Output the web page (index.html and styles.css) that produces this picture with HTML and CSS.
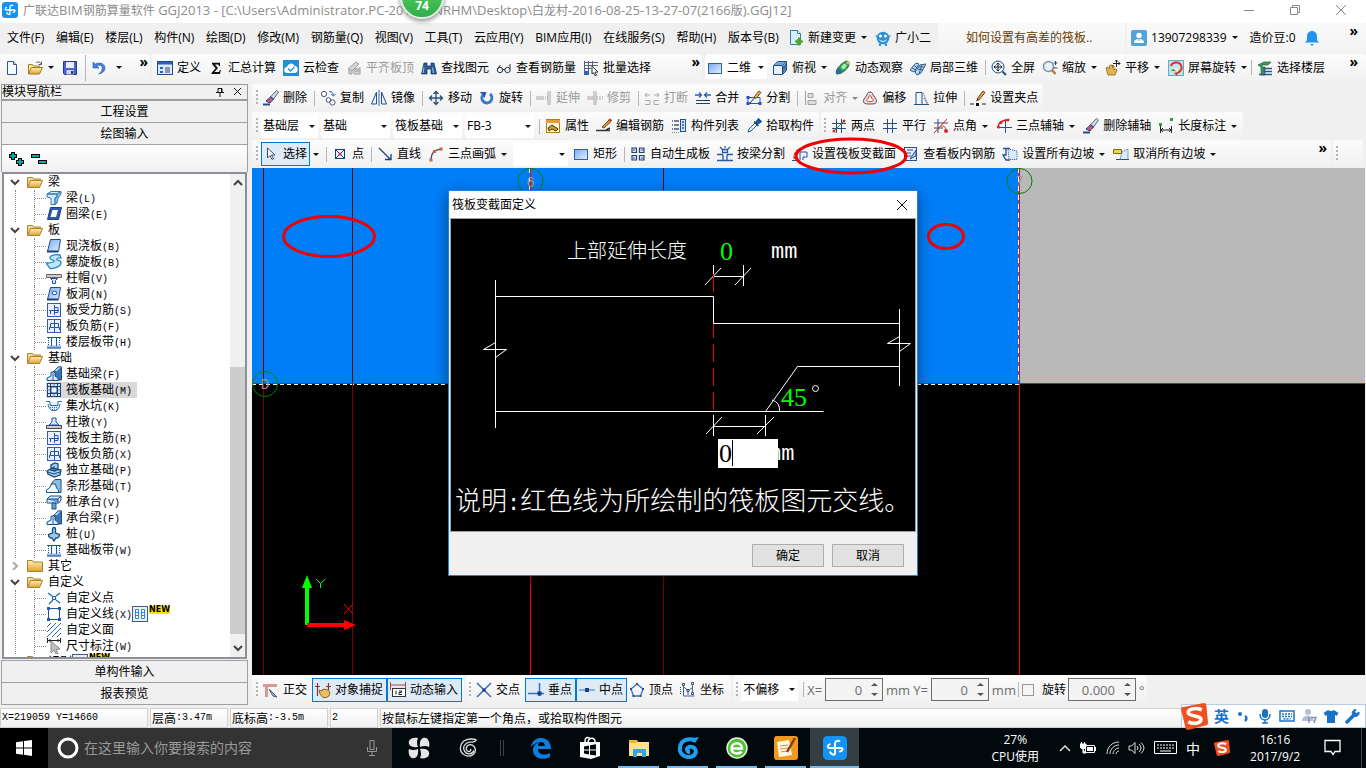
FILE: index.html
```html
<!DOCTYPE html>
<html lang="zh-CN">
<head>
<meta charset="utf-8">
<title>广联达BIM钢筋算量软件 GGJ2013</title>
<link rel="stylesheet" href="styles.css">
</head>
<body>
<svg class="sprite" aria-hidden="true">
<defs>
<linearGradient id="gb" x1="0" y1="0" x2="1" y2="1"><stop offset="0" stop-color="#7aaaf0"/><stop offset="1" stop-color="#e4efff"/></linearGradient>
<linearGradient id="gy" x1="0" y1="0" x2="0" y2="1"><stop offset="0" stop-color="#fff0b0"/><stop offset="1" stop-color="#e0a030"/></linearGradient>
<symbol id="app" viewBox="0 0 16 16"><rect width="16" height="16" rx="3" fill="#1493f5"/><path d="M8 12.500V5a1.900 1.900 0 0 1 3.300-1.200M8 12.500c-1.800 0-3-.8-3.300-2.200M3.500 8h9.500M3.500 8c-.6-1.300.2-2.600 1.500-2.600M13 8c0 1.600-1 2.400-2.300 2.400" fill="none" stroke="#fff" stroke-width="1.300"/></symbol>
<symbol id="new" viewBox="0 0 16 16"><path d="M3.500 1.500h6l3 3v10h-9z" fill="#f6faff" stroke="#2f548c"/><path d="M9.500 1.500v3h3" fill="#cfe0f5" stroke="#2f548c"/></symbol>
<symbol id="open" viewBox="0 0 16 16"><path d="M1.500 14V4.500h4l1 1.500h6v2" fill="#ffe9a0" stroke="#a87a20"/><path d="M1.500 14l3-6.500h11l-3 6.500z" fill="url(#gy)" stroke="#a87a20"/><path d="M9 3c2-2 4-1 5 1m.500-2.500V4.500h-3" fill="none" stroke="#556"/></symbol>
<symbol id="save" viewBox="0 0 16 16"><path d="M1.500 1.500h13v13h-12l-1-1z" fill="#4d63c9" stroke="#27348b"/><path d="M4 2h8v6H4z" fill="#e8edff"/><path d="M4.500 10h7v4.500h-7z" fill="#cfd6e8"/><path d="M9 11h2v3H9z" fill="#333b70"/></symbol>
<symbol id="undo" viewBox="0 0 16 16"><path d="M2 2v6h6L5.800 5.800C9 4 12 6 11 9.500 10.500 12 9 13 7.500 14c4-.5 6.500-3 6.500-6 0-4-5-6.500-9.800-3.900z" fill="#4a82dc" stroke="#2458ac" stroke-width=".6"/></symbol>
<symbol id="def" viewBox="0 0 16 16"><rect x=".5" y="1.500" width="15" height="13" fill="#dce9fb" stroke="#1c4a94"/><path d="M1 2h14v2.500H1z" fill="#2a62b8"/><path d="M3 7h3v2H3zM3 11h3v2H3z" fill="#2a62b8"/><path d="M8 8h5M8 12h5M8 10h5" stroke="#445"/></symbol>
<symbol id="sum" viewBox="0 0 16 16"><path d="M4 2.800h8V6h-1l-.6-1.500H7L10 8l-3.500 4H11l.8-2h1L12 14H3.500v-1L7.500 8.300 4 4z" fill="#111"/></symbol>
<symbol id="cloudck" viewBox="0 0 16 16"><rect width="16" height="16" fill="#1f8fd8"/><path d="M4.500 13a3 3 0 0 1-.5-6 4 4 0 0 1 7.500-1.200A3.700 3.700 0 0 1 12 13z" fill="#fff"/><path d="M5 8.500l2.500 2.500 4-4" fill="none" stroke="#1f8fd8" stroke-width="1.400"/></symbol>
<symbol id="flat" viewBox="0 0 16 16"><path d="M2 9l8-7 3 2-7 7zM3 10v4h3v-3M8 9v5h6V7" fill="#d4d4d4" stroke="#a0a0a0"/><path d="M9 11h4M9 9h4" stroke="#999"/></symbol>
<symbol id="bino" viewBox="0 0 16 16"><path d="M3 3h3v3h4V3h3l2.500 11H10v-5H6v5H.5z" fill="#2c5b96" stroke="#13305c" stroke-width=".7"/><path d="M3 7.500L2 13m9.500-5.500l1 5.500" stroke="#a8c8ee"/></symbol>
<symbol id="glass" viewBox="0 0 16 16"><circle cx="4" cy="10" r="2.700" fill="#e8f0fa" stroke="#333"/><circle cx="11.500" cy="10" r="2.700" fill="#e8f0fa" stroke="#333"/><path d="M6.500 9.500h2.500M1.300 9l3.200-4M14 9V4" fill="none" stroke="#333"/></symbol>
<symbol id="batch" viewBox="0 0 16 16"><path d="M1.500 1v14M1 2.500h14M1 5.500h14M1 8.500h7M5.500 1v14M9.500 1v5" fill="none" stroke="#55627a"/><path d="M1 11h5v4H1z" fill="#2f64b8"/><path d="M9 6l6 6-3 .2 1.500 3-1.500.5-1.500-3L9 14z" fill="#fff" stroke="#334"/></symbol>
<symbol id="rect" viewBox="0 0 16 16"><rect x="1.500" y="3.500" width="13" height="10" fill="url(#gb)" stroke="#2f5fb5"/></symbol>
<symbol id="cube" viewBox="0 0 16 16"><path d="M1.500 5.500l4-4h9v9l-4 4h-9z" fill="#e6f1ff" stroke="#28507e"/><path d="M1.500 5.500h9v9M10.500 5.500l4-4" fill="none" stroke="#28507e"/><path d="M2 5l3.500-3H14l-3.500 3z" fill="#6fa4dc"/><path d="M11 6l3-3v7l-3 3.500z" fill="#3e73ad"/></symbol>
<symbol id="orbit" viewBox="0 0 16 16"><path d="M13 1.500c2 1 1 5-2 8s-7 5-9 4 0-5 3-8 6-5 8-4z" fill="#36a257" stroke="#145f2b"/><ellipse cx="9" cy="6.500" rx="3" ry="2" transform="rotate(-45 9 6.500)" fill="#a3ecae"/><path d="M1 13l3-5 3 3-5 4z" fill="#2f64b2"/><path d="M12 2l2 2" stroke="#f2d23a" stroke-width="2"/></symbol>
<symbol id="part3d" viewBox="0 0 16 16"><path d="M0 10l6-7 3 1-5 8zM5 12l5-7 6-1-5 9-4 2z" fill="#bfd9f2" stroke="#2b5b88"/><path d="M2 8l4 2M4 5.500l3 2M8 9l5 1M9 7l5 0M12 4.500L9 14" stroke="#2b5b88" fill="none"/></symbol>
<symbol id="full" viewBox="0 0 16 16"><circle cx="7" cy="7" r="6" fill="#e9f2fd" stroke="#284f80"/><path d="M11.500 11.500L15 15" stroke="#284f80" stroke-width="2"/><path d="M7 3v8M3 7h8M5.500 4.500L7 3l1.500 1.500M5.500 9.500L7 11l1.500-1.500M4.500 5.500L3 7l1.500 1.500M9.500 5.500L11 7 9.500 8.500" fill="none" stroke="#222"/></symbol>
<symbol id="zoom" viewBox="0 0 16 16"><circle cx="6.500" cy="6.500" r="5" fill="#e9f2fd" stroke="#7d93b0" stroke-width="1.500"/><path d="M10 10l3.500 4" stroke="#bc7a28" stroke-width="2.500"/><path d="M13.500 1v4M11.500 3h4M11.500 8h4" stroke="#28507e"/></symbol>
<symbol id="pan" viewBox="0 0 16 16"><path d="M1 8l2 7h7l2-5-2-1-1 1V6L7.500 5v3L7 5H5.500L4 6l.5 3L2.500 7z" fill="#e0b355" stroke="#8d6620" stroke-width=".8"/><path d="M11.500 0v7M8 3.500h7M10 1.500L11.500 0 13 1.500M13.500 2L15 3.500 13.500 5" fill="none" stroke="#222"/></symbol>
<symbol id="spin" viewBox="0 0 16 16"><rect x=".5" y=".5" width="15" height="15" fill="#bfe5f0" stroke="#61a9c4"/><path d="M3 6c1-4 8-5 10-1s-1 7-4 8" fill="none" stroke="#dc3430" stroke-width="2"/><path d="M3 11l3-3 2 3z" fill="#3c9741"/><path d="M10 12l-4 1 3 3z" fill="#dc3430"/><path d="M4 8h6v4" fill="#fff0b8"/></symbol>
<symbol id="floor" viewBox="0 0 16 16"><path d="M1 5l6-3h7l-3 3H5v2h3v8H4V7z" fill="#3d9a5c" stroke="#1d5e38" stroke-width=".7"/><path d="M6 8.500h9M6 11.500h9M2 14.500h13" stroke="#28578e" stroke-width="1.500"/></symbol>
<symbol id="erase" viewBox="0 0 16 16"><path d="M0 14.500h7" stroke="#1d4f96" stroke-width="2"/><path d="M13.500.5L15.500 2l-5 7-3-2z" fill="#d5dde8" stroke="#566"/><path d="M7.500 7l3 2L7 13l-4-2z" fill="#7c6fc8" stroke="#2e3173"/><path d="M5 9l4 2.500" stroke="#e6503c" stroke-width="1.500"/></symbol>
<symbol id="copy" viewBox="0 0 16 16"><circle cx="4" cy="4" r="2.600" fill="#fff" stroke="#44597a"/><circle cx="8.500" cy="10" r="2.300" fill="#fff" stroke="#44597a"/><circle cx="12.500" cy="12.500" r="2.600" fill="#fff" stroke="#44597a"/><path d="M9 1.500c3 0 4 1 4.500 4M11 4l2.500 2L15.500 4" fill="none" stroke="#2c62ad"/></symbol>
<symbol id="mirror" viewBox="0 0 16 16"><path d="M5.500 2v12H.5zM10.500 2v12h5z" fill="#eaf3ff" stroke="#2c4e80"/><path d="M8 0v16" stroke="#2c62ad"/></symbol>
<symbol id="move" viewBox="0 0 16 16"><path d="M8 1.500v13M1.500 8h13M5.500 4L8 1.500 10.500 4M5.500 12L8 14.500l2.500-2.500M4 5.500L1.500 8 4 10.500M12 5.500L14.500 8 12 10.500" fill="none" stroke="#2a4d7c" stroke-width="1.300"/></symbol>
<symbol id="rot" viewBox="0 0 16 16"><path d="M3.500 5.500a5 5 0 1 0 7.500-1.500" fill="none" stroke="#3c79cb" stroke-width="3"/><path d="M1 2h6.500L5.500 8z" fill="#2458ac"/></symbol>
<symbol id="extend" viewBox="0 0 16 16"><path d="M0 7h7M0 9h7M12 1v14M14 1v14" stroke="#a6a6a6"/><path d="M7 7h5M7 9h5" stroke="#aaa" stroke-dasharray="1 1"/></symbol>
<symbol id="trim" viewBox="0 0 16 16"><path d="M0 7h7M0 9h7M7 1v14M9 1v14" stroke="#a6a6a6"/><path d="M9 7h7M9 9h7" stroke="#aaa" stroke-dasharray="2 1"/></symbol>
<symbol id="brk" viewBox="0 0 16 16"><path d="M1 10.500h5v4H1M15 10.500h-5v4h5M1 5h5M3 3L1 5l2 2M15 5h-5M13 3l2 2-2 2" fill="none" stroke="#aaa"/></symbol>
<symbol id="merge" viewBox="0 0 16 16"><path d="M1 10.500h14M1 13.500h14" stroke="#203f6c"/><path d="M0 5h6M4 2.500L6.500 5 4 7.500M16 5h-6M12 2.500L9.500 5 12 7.500" fill="none" stroke="#2c62ad" stroke-width="1.300"/></symbol>
<symbol id="split" viewBox="0 0 16 16"><path d="M2 7.500h12v6H2z" fill="#eef6ff" stroke="#2450ce"/><path d="M4 13l8-9" stroke="#222"/><path d="M8 7l5-6 2 1.500-5 6z" fill="#e1b04c" stroke="#755018"/><path d="M.5 6h3v3h-3zM.5 12h3v3h-3zM12.500 12h3v3h-3z" fill="#244ec4"/></symbol>
<symbol id="align" viewBox="0 0 16 16"><path d="M2.500 1v14" stroke="#a0a0a0"/><path d="M5 3.500h5v4H5zM5 10.500h8v4H5z" fill="#ddd" stroke="#a0a0a0"/></symbol>
<symbol id="offset" viewBox="0 0 16 16"><path d="M5 5c0-4 6-4 6 0l3 4c2 5-2 5-6 5s-8 0-6-5z" fill="#f5d7d3" stroke="#45557d"/><path d="M6.500 8c0-3 3-3 3 0l1.500 1.500c1 2-1 2-3 2s-4 0-3-2z" fill="#fff" stroke="#d0342c"/></symbol>
<symbol id="stretch" viewBox="0 0 16 16"><path d="M3 14.500V2.500h6v12z" fill="#f0f7ff" stroke="#28507e"/><path d="M10 3l5 11.500M11 8l3 6" stroke="#28507e" stroke-dasharray="1 1" fill="none"/><path d="M1 14.500h15" stroke="#28507e"/></symbol>
<symbol id="grippt" viewBox="0 0 16 16"><path d="M0 14h4M12 14h4" stroke="#222"/><path d="M6 13h3v3H6z" fill="#111"/><path d="M7 9l6-8 2 1.500L9 10z" fill="#e1a34c" stroke="#72450d"/><path d="M7 9l2 1-3 1.500z" fill="#333"/></symbol>
<symbol id="prop" viewBox="0 0 16 16"><rect x="1.500" y="1.500" width="13" height="13" fill="#fff6dc" stroke="#b7791e"/><path d="M1 2h14v3H1z" fill="#e59b38"/><path d="M3 10l4-3 6 4-2 2-4-2-3 2z" fill="#cf9e30" stroke="#46350d"/></symbol>
<symbol id="pen" viewBox="0 0 16 16"><path d="M0 12.500h14M10 12l4-2" fill="none" stroke="#333" stroke-width="1.500"/><path d="M6 9l7-7 2 1.500-7 6.500z" fill="#d99b43" stroke="#72450d"/><path d="M13 1l2.500 2" stroke="#d43a2a" stroke-width="2"/></symbol>
<symbol id="list" viewBox="0 0 16 16"><path d="M1 3h1M1 7h1M1 11h1M3 3h5M3 7h5M3 11h5" stroke="#44597a" stroke-width="1.500"/><rect x="9.500" y="1.500" width="5" height="12" fill="#cfe2fb" stroke="#28507e"/><path d="M11 4h2M11 7h2M11 10h2" stroke="#2458ac" stroke-width="1.500"/><path d="M1 14.500h7" stroke="#888" stroke-dasharray="1 1"/></symbol>
<symbol id="pick" viewBox="0 0 16 16"><path d="M2 14l1-3 6-6 2 2-6 6z" fill="#dff0ff" stroke="#2b5d91"/><path d="M8 3.500l4.500 4.500M9.500 5l3-4 2.500 2.500-4 3z" fill="#2474be" stroke="#174b7e" stroke-width="1.500"/></symbol>
<symbol id="twop" viewBox="0 0 16 16"><path d="M5.500 1v14M10.500 1v14M1 5.500h14M1 10.500h14" stroke="#2f4d7a"/><path d="M2 14L14 2" stroke="#1d9d3a"/><circle cx="3" cy="13" r="1.500" fill="#d22"/><circle cx="13" cy="3" r="1.500" fill="#d22"/></symbol>
<symbol id="para" viewBox="0 0 16 16"><path d="M5.500 1v14M10.500 1v14M1 5.500h14M1 10.500h14" stroke="#2f4d7a"/></symbol>
<symbol id="pang" viewBox="0 0 16 16"><path d="M5 1v14M1 5h14M1 10h9" stroke="#2f4d7a"/><path d="M1 15L14 1M8 8c4 0 5 2 5 5" fill="none" stroke="#d22"/><circle cx="13" cy="13" r="2" fill="#d22"/></symbol>
<symbol id="tria" viewBox="0 0 16 16"><path d="M9.500 1v14M2 9.500h14" stroke="#2f4d7a"/><path d="M2 10C2 5 6 2 13 2" fill="none" stroke="#d22" stroke-width="1.300"/><circle cx="2.500" cy="9" r="1.500" fill="#d22"/><circle cx="12" cy="2" r="1.500" fill="#d22"/><circle cx="5" cy="4.500" r="1.500" fill="#d22"/></symbol>
<symbol id="len" viewBox="0 0 16 16"><path d="M2.500 8v7M13.500 8v7M3 12h10M5 10l-2 2 2 2M11 10l2 2-2 2" fill="none" stroke="#222"/><path d="M1 5h3v3H1zM12 0h3v3h-3z" fill="#2ba03c"/></symbol>
<symbol id="cursor" viewBox="0 0 16 16"><path d="M4.500 2v10l2.500-2.500 2 4 1.500-.8-2-3.700h3.500z" fill="#fff" stroke="#334c78"/></symbol>
<symbol id="pt" viewBox="0 0 16 16"><rect x="3.500" y="3.500" width="9" height="9" fill="#eaf2ff" stroke="#1c3f78"/><path d="M4 4l8 8M12 4l-8 8" stroke="#1c3f78"/><circle cx="8" cy="8" r="1.500" fill="#d33"/></symbol>
<symbol id="line" viewBox="0 0 16 16"><path d="M2 2l11 11M8 13.500h6V8" fill="none" stroke="#1c3f78" stroke-width="1.300"/></symbol>
<symbol id="arc" viewBox="0 0 16 16"><path d="M3 14C3 8 5 4 13 3" fill="none" stroke="#2258a8" stroke-width="1.500"/><path d="M1.500 12.500h3v3h-3zM11.500 1.500h3v3h-3zM5 4h3v3H5z" fill="#dc5a36"/></symbol>
<symbol id="auto" viewBox="0 0 16 16"><path d="M2 2h4.500v4.500H2zM9.500 2H14v4.500H9.500zM2 9.500h4.500V14H2zM9.500 9.500H14V14H9.500z" fill="#d9e8fb" stroke="#2b3f6c" stroke-width="1.200"/><path d="M3 4h2M11 4h2M3 12h2M11 12h2" stroke="#2458c4"/></symbol>
<symbol id="beam" viewBox="0 0 16 16"><path d="M0 8.500h6M10 8.500h6M0 14.500h16M6 8.500V14M10 8.500V14M5.500 3.500h5v3h-5zM8 0v2M3 1l2 2M13 1l-2 2" fill="#eaf3ff" stroke="#2858a0" stroke-width="1.300"/></symbol>
<symbol id="raft" viewBox="0 0 16 16"><path d="M8 14V6h7v5h-4v3" fill="#eaf3ff" stroke="#234eac"/><path d="M2 13c0-6 2-9 7-10" fill="none" stroke="#d94830" stroke-width="1.500" stroke-dasharray="3 1"/><path d="M0 14.500h7" stroke="#234eac"/></symbol>
<symbol id="view" viewBox="0 0 16 16"><rect x="1.500" y="1.500" width="12" height="13" fill="#eaf3ff" stroke="#28508e"/><path d="M4 4h6M4 7h4M4 10h4" stroke="#28508e"/><path d="M13 4l-6 9 6-3z" fill="#a9c8ee" stroke="#28508e"/></symbol>
<symbol id="slope" viewBox="0 0 16 16"><path d="M1 2.500h7M4 3v6H1l3 5h4" fill="none" stroke="#234e9c" stroke-width="1.300"/><path d="M6 3l9 2v8.500H7z" fill="#dceafb" stroke="#234e9c" stroke-dasharray="1 1"/></symbol>
<symbol id="unslope" viewBox="0 0 16 16"><path d="M.5 3.500h8v4h-8z" fill="#f3d34a" stroke="#866a12"/><path d="M7 13.500L9 6l6-3v10.500z" fill="#dceafb" stroke="#234e9c" stroke-dasharray="1 1"/><path d="M3 13.500h13" stroke="#234e9c"/></symbol>
<symbol id="newchg" viewBox="0 0 16 16"><path d="M2.500.5h7l3 3v11h-10z" fill="#d9efff" stroke="#2f7eae"/><path d="M9.500.5v3h3" fill="#fff" stroke="#2f7eae"/><path d="M11 7.500v8M7 11.500h8M9 9.500l4 4M13 9.500l-4 4" stroke="#49a82c" stroke-width="2"/></symbol>
<symbol id="fish" viewBox="0 0 16 16"><circle cx="8" cy="8" r="6.300" fill="#2a8fd4"/><path d="M0 5l3 1v3zM16 5l-3 1v3z" fill="#2a8fd4"/><circle cx="5.500" cy="6" r="1.500" fill="#fff"/><circle cx="10.500" cy="6" r="1.500" fill="#fff"/><path d="M4 9c2 2.500 6 2.500 8 0-1 4-7 4-8 0z" fill="#fff"/><path d="M5 13.500V16M11 13.500V16" stroke="#2a8fd4" stroke-width="2"/></symbol>
<symbol id="user" viewBox="0 0 16 16"><rect width="16" height="16" rx="2" fill="#4fa4d8"/><circle cx="8" cy="5.500" r="2.700" fill="#fff"/><path d="M3 13c0-3 2-4 5-4s5 1 5 4z" fill="#fff"/><path d="M8 9v2" stroke="#4fa4d8"/></symbol>
<symbol id="bell" viewBox="0 0 14 16"><path d="M2 10V6a5 5 0 0 1 10 0v4l2 2.500H0z" fill="#2492f0"/><path d="M5 14h4l-2 2z" fill="#2492f0"/></symbol>
<symbol id="fopen" viewBox="0 0 16 16"><path d="M.5 13V3.500h5l1 1.500h7v3" fill="#f7d887" stroke="#a8822c"/><path d="M.5 13.500l3-7h12l-3 7z" fill="url(#gy)" stroke="#a8822c"/></symbol>
<symbol id="fclosed" viewBox="0 0 16 16"><path d="M.5 13.500V2.500h5l1 1.500h9v9.500z" fill="url(#gy)" stroke="#a8822c"/></symbol>
<symbol id="tbeam" viewBox="0 0 16 16"><path d="M1 4l4-2.500h10L11 4zM1 4h10v3l-2 1v6.500H5V8L1 7z" fill="#d8ecff" stroke="#2a79b4"/><path d="M11 7V4l4-2.500V4l-3 4-1 5-2 1.500V8z" fill="#8fc2ee" stroke="#2a79b4"/></symbol>
<symbol id="ring" viewBox="0 0 16 16"><path d="M4.500 1.500h11l-3 12h-11z" fill="#2f5ca9" stroke="#1a3c80"/><path d="M6.500 4h5.500l-2 7H4.500z" fill="#fff"/></symbol>
<symbol id="slab" viewBox="0 0 16 16"><path d="M4.500 1.500h10l-2 12h-11z" fill="url(#gb)" stroke="#1a4a96"/><path d="M1 13.500h11" stroke="#1a3c80" stroke-width="2"/></symbol>
<symbol id="spiral" viewBox="0 0 16 16"><path d="M14 1C8 0 3 2 4 4.500c1 2 5 1.500 4 3C7 9 4 9 0 9l4 5.500c4 .5 11-2 11-6 0-3-5-1.500-4-3.500.5-1.500 3-1 4-1z" fill="#bfe6fb" stroke="#2a84be" stroke-width="1.300"/></symbol>
<symbol id="cap" viewBox="0 0 16 16"><path d="M.5 4.500h15v3H.5z" fill="#ccc" stroke="#666"/><path d="M4.500 8.500h7l-2 2v3h-3v-3z" fill="#d8e8ff" stroke="#234eac"/></symbol>
<symbol id="hole" viewBox="0 0 16 16"><path d="M4.500 1.500h10l-2 12h-11z" fill="url(#gb)" stroke="#1a4a96"/><path d="M1 13.500h11" stroke="#1a3c80" stroke-width="2"/><ellipse cx="8.500" cy="7" rx="2.500" ry="1.700" fill="#fff" stroke="#1a4a96"/></symbol>
<symbol id="bar1" viewBox="0 0 16 16"><rect x="1.500" y="1.500" width="13" height="13" fill="#e8f1ff" stroke="#2f5fb5"/><path d="M3 8.500h10M8.500 3v10M4.500 8v4M8 5.500h4v5H8" fill="none" stroke="#2458ac"/></symbol>
<symbol id="bar2" viewBox="0 0 16 16"><rect x="1.500" y="1.500" width="13" height="13" fill="#e8f1ff" stroke="#2f5fb5"/><path d="M8.500 2v12M3.500 12V9.500h10V12M4.500 9V5.500h8V9" fill="none" stroke="#2458ac"/></symbol>
<symbol id="strip" viewBox="0 0 16 16"><path d="M1 11.500h14v3H1z" fill="#8fb7ee"/><path d="M1 14h14M1 3.500h14M5.500 4v8M10.500 4v8" stroke="#1d52a0"/><path d="M2.500 4v8M13.500 4v8" stroke="#1d52a0" stroke-dasharray="1 1"/></symbol>
<symbol id="fbeam" viewBox="0 0 16 16"><path d="M7 6l5-5h3.500v13h-4z" fill="#3b76b4" stroke="#184e87"/><path d="M8 5l4-4h3.500L11 6z" fill="#9fc9ee" stroke="#184e87" stroke-width=".7"/><path d="M1 14.500V12l4-2V6h4v4l3 2v2.500z" fill="#dcebfa" stroke="#184e87"/><path d="M7 7v7" stroke="#7aa8d8" stroke-width="2"/></symbol>
<symbol id="raftf" viewBox="0 0 16 16"><rect x="1.500" y="1.500" width="13" height="13" fill="#d8e9ff" stroke="#1c3f78"/><path d="M4.500 1v14M11.500 1v14M1 4.500h14M1 11.500h14" stroke="#1c3f78"/><path d="M8 1v14M1 8h14" stroke="#5078b8"/><rect x="5" y="5" width="6" height="6" fill="#f2f7ff" stroke="#1c3f78"/></symbol>
<symbol id="pit" viewBox="0 0 16 16"><path d="M0 3.500h4v4h8v-4h4M2 6c1 9 11 9 12 0" fill="#e3efff" stroke="#2a70ae"/><path d="M4 9.500h8M6 11.500h5" stroke="#2a70ae" stroke-dasharray="1 1"/></symbol>
<symbol id="pier" viewBox="0 0 16 16"><path d="M.5 11.500h15v3H.5z" fill="#ccc" stroke="#444"/><path d="M3 11l3-3V4h4v4l3 3z" fill="#d8e8ff" stroke="#234eac"/></symbol>
<symbol id="indep" viewBox="0 0 16 16"><path d="M1 9l5-3 9 2-1 5-6 2-6-3zM5 8V3l4-2 3 1v5L9 9z" fill="#a4ccec" stroke="#164a7c" stroke-width="1.300"/><path d="M8 4v5M2 10l6 2 6-2" fill="none" stroke="#164a7c"/></symbol>
<symbol id="stripf" viewBox="0 0 16 16"><path d="M5 6l4-4.500h6v13h-4z" fill="#8fbce2" stroke="#184e87"/><path d="M.5 14.500V12l3-2 2-4h4l1 4 2 2v2.500z" fill="#f1f8ff" stroke="#184e87"/></symbol>
<symbol id="pcap" viewBox="0 0 16 16"><path d="M1 5l3-3h11v4l-2 3H1z" fill="#d8ecff" stroke="#184e87"/><path d="M1 5h11v4M12 5l3-3M6 9h4v6H6z" fill="#6ba0d4" stroke="#184e87"/></symbol>
<symbol id="pile" viewBox="0 0 16 16"><path d="M6.500 7V3c0-2 3-2 3 0v4l4 1.500c0 3-2 3.500-3.500 3.500L8 15l-2-3c-1.500 0-3.500-.5-3.500-3.500z" fill="#9cc8ec" stroke="#164a7c" stroke-width="1.300"/></symbol>
<symbol id="cpt" viewBox="0 0 16 16"><path d="M2 3l4 3M14 3l-4 3M3 14l4-4M14 13l-4-3" stroke="#2368b0" stroke-width="1.300"/><rect x="6.500" y="6.500" width="3" height="3" fill="#cfe6ff" stroke="#2368b0"/></symbol>
<symbol id="cline" viewBox="0 0 16 16"><rect x="2.500" y="2.500" width="11" height="11" fill="none" stroke="#1c4f9c"/><path d="M1 1h3v3H1zM12 1h3v3h-3zM1 12h3v3H1zM12 12h3v3h-3z" fill="#1c5fc0"/></symbol>
<symbol id="cface" viewBox="0 0 16 16"><path d="M1 5l4-4M1 10l9-9M1 15L15 1M6 15l9-9M11 15l4-4" stroke="#2368b0"/></symbol>
<symbol id="dim" viewBox="0 0 16 16"><path d="M1.500 0v5M14.500 0v5M2 2.500h12M4 1v3M12 1v3" stroke="#222"/><path d="M5 3l9 8-4 .4 2 4-2 .6-2-4-3 3z" fill="#c2c2c2" stroke="#888"/></symbol>
<symbol id="grid2" viewBox="0 0 16 16"><rect x=".5" y=".5" width="15" height="15" fill="#e2f0ff" stroke="#445b78"/><path d="M3.500 3.500h3v9h-3zM9.500 3.500h3v9h-3zM3 6.500h4M3 9.500h4M9 6.500h4M9 9.500h4" fill="#fff" stroke="#2e86d8"/></symbol>
<symbol id="ortho" viewBox="0 0 16 16"><path d="M0 2h14v3H5v10H2V5H0z" fill="#d59a96"/><path d="M6 7l8 8-4-1z" fill="#a9c1de" stroke="#44597a"/></symbol>
<symbol id="snap" viewBox="0 0 16 16"><path d="M2.500 1v13M13.500 1v8M0 4.500h5M11 4.500h5" stroke="#8a3030" stroke-width="1.200"/><path d="M4 8l3 1 1-2 5 1 2 2-1 4-3 1.500H8L5 12z" fill="#e9c060" stroke="#906520"/></symbol>
<symbol id="dyn" viewBox="0 0 16 16"><path d="M.5 0v8M15.500 0v8M1 3h14" stroke="#a04a4a"/><rect x="2.500" y="6.500" width="13" height="8" fill="#fff" stroke="#333"/><path d="M6 8.500v4M9 9h2.500v1.500H9v2h3" fill="none" stroke="#222"/></symbol>
<symbol id="xp" viewBox="0 0 16 16"><path d="M1 1l14 14M15 1L1 15" stroke="#3b6fb8" stroke-width="1.500"/><rect x="6.500" y="6.500" width="3" height="3" fill="#173f88"/></symbol>
<symbol id="perp" viewBox="0 0 16 16"><path d="M0 11.500h16M11.500 1v13" stroke="#3b6fb8" stroke-width="1.500"/><rect x="9.500" y="9.500" width="4" height="4" fill="#173f88"/></symbol>
<symbol id="mid" viewBox="0 0 16 16"><path d="M0 8h16" stroke="#6c9bdc" stroke-width="1.500"/><rect x="6" y="6" width="4" height="4" fill="#173f88"/></symbol>
<symbol id="vert" viewBox="0 0 16 16"><path d="M8 2l6 5-2.500 7h-7L2 7z" fill="none" stroke="#3b6fb8" stroke-width="1.300"/><path d="M7 1h2v2H7zM13 6h2v2h-2zM1 6h2v2H1zM3.500 13h2v2h-2zM10.500 13h2v2h-2z" fill="#244e98"/></symbol>
<symbol id="coord" viewBox="0 0 16 16"><path d="M3.500 3v11h11M4 5l4 4 4-3M8 9v4M12.500 2v9" fill="none" stroke="#346bb5"/><path d="M2.500 1.500h2v2h-2zM7 7.500h2v2H7zM11.500.5h2v2h-2zM11.500 10.500h2v2h-2z" fill="#fff" stroke="#445"/><path d="M.5 5v8" stroke="#444" stroke-dasharray="1 1"/></symbol>
<symbol id="sogou" viewBox="0 0 26 26"><path d="M1 4L22 0q2 0 2.400 2L26 19q0 2-1.500 2.500L7 26q-2 0-2.600-1.600L0 6q0-1.500 1-2z" fill="#f0501e"/><path d="M20 6.500C13 4 6.500 6 7 9.500c.5 4 12.500 2 12.300 6.500C19 20 11 20.500 7 18" fill="none" stroke="#fff" stroke-width="3.400"/></symbol>
<symbol id="swirl" viewBox="0 0 24 24"><path d="M19 4C12 2 5 4 4 11s4 10 9 10c6 0 8-5 6-8s-7-3-8 0c0 2 1 3 3 3" fill="none" stroke="currentColor" stroke-width="4"/><path d="M12 3l11-2-4 6z" fill="currentColor"/></symbol>
</defs>
</svg>

<div class="app">
  <header class="title">
    <svg class="ic"><use href="#app"/></svg>
    <h1>广联达<span>BIM</span>钢筋算量软件<span> GGJ2013 - [C:\Users\Administrator.PC-201607NRHM\Desktop\</span>白龙村<span>-2016-08-25-13-27-07(2166</span>版<span>).GGJ12]</span></h1>
    <div class="winbtns">
      <button aria-label="最小化"><svg width="12" height="12"><path d="M1 6.500h10" stroke="#888"/></svg></button>
      <button aria-label="还原"><svg width="12" height="12"><path d="M1.500 3.500h7v7h-7zM3.500 3V1.500h7v7H9" fill="none" stroke="#888"/></svg></button>
      <button aria-label="关闭"><svg width="12" height="12"><path d="M1 1l10 10M11 1L1 11" stroke="#888"/></svg></button>
    </div>
    <div class="ball">74</div>
  </header>

  <nav class="menu">
    <div class="menus">
      <button>文件(F)</button><button>编辑(E)</button><button>楼层(L)</button><button>构件(N)</button><button>绘图(D)</button><button>修改(M)</button><button>钢筋量(Q)</button><button>视图(V)</button><button>工具(T)</button><button>云应用(Y)</button><button>BIM应用(I)</button><button>在线服务(S)</button><button>帮助(H)</button><button>版本号(B)</button>
    </div>
    <div class="extras">
      <button class="tool"><svg class="ic"><use href="#newchg"/></svg>新建变更<i class="dd"></i></button>
      <button class="tool"><svg class="ic"><use href="#fish"/></svg>广小二</button>
    </div>
    <a class="tip" href="#tip">如何设置有高差的筏板..</a>
    <div class="account">
      <button class="tool"><svg class="ic"><use href="#user"/></svg><span class="phone">13907298339</span><i class="dd"></i></button>
      <span>造价豆:0</span>
      <svg class="bell" viewBox="0 0 14 16"><use href="#bell"/></svg>
      <button class="more" aria-label="更多">»</button>
    </div>
  </nav>

  <div class="bar top">
    <div class="grp ga">
      <button class="tool" aria-label="新建"><svg class="ic"><use href="#new"/></svg></button>
      <button class="tool" aria-label="打开"><svg class="ic"><use href="#open"/></svg><i class="dd"></i></button>
      <button class="tool" aria-label="保存"><svg class="ic"><use href="#save"/></svg></button>
      <i class="sep tall"></i>
      <button class="tool" aria-label="撤销"><svg class="ic"><use href="#undo"/></svg><i class="dd wide"></i></button>
      <button class="more" aria-label="更多">»</button>
    </div>
    <div class="grp gbx">
      <button class="tool"><svg class="ic"><use href="#def"/></svg>定义</button>
      <button class="tool"><svg class="ic"><use href="#sum"/></svg>汇总计算</button>
      <button class="tool"><svg class="ic"><use href="#cloudck"/></svg>云检查</button>
      <button class="tool" disabled><svg class="ic"><use href="#flat"/></svg>平齐板顶</button>
      <button class="tool"><svg class="ic"><use href="#bino"/></svg>查找图元</button>
      <button class="tool"><svg class="ic"><use href="#glass"/></svg>查看钢筋量</button>
      <button class="tool"><svg class="ic"><use href="#batch"/></svg>批量选择</button>
      <button class="more" aria-label="更多">»</button>
    </div>
    <div class="grp gc">
      <label class="pick w62"><svg class="ic"><use href="#rect"/></svg><select aria-label="视图"><option>二维</option></select><i class="dd"></i></label>
      <button class="tool"><svg class="ic"><use href="#cube"/></svg>俯视<i class="dd"></i></button>
      <button class="tool"><svg class="ic"><use href="#orbit"/></svg>动态观察</button>
      <button class="tool"><svg class="ic"><use href="#part3d"/></svg>局部三维</button>
      <i class="sep"></i>
      <button class="tool"><svg class="ic"><use href="#full"/></svg>全屏</button>
      <button class="tool"><svg class="ic"><use href="#zoom"/></svg>缩放<i class="dd"></i></button>
      <button class="tool"><svg class="ic"><use href="#pan"/></svg>平移<i class="dd"></i></button>
      <button class="tool tight"><svg class="ic"><use href="#spin"/></svg>屏幕旋转<i class="dd"></i></button>
      <i class="sep"></i>
      <button class="tool"><svg class="ic"><use href="#floor"/></svg>选择楼层</button>
      <button class="more" aria-label="更多">»</button>
    </div>
  </div>

  <div class="body">
    <aside class="side">
      <div class="sidehead"><h2>模块导航栏</h2>
        <button aria-label="固定"><svg width="10" height="10"><path d="M3 1.500h4v4H3zM1 5.500h8M5 6v4M6.500 1.500v4" fill="none" stroke="#111"/></svg></button>
        <button aria-label="关闭"><svg width="10" height="10"><path d="M1 1l7 7M8 1L1 8" stroke="#111"/></svg></button>
      </div>
      <button class="modbtn">工程设置</button>
      <button class="modbtn">绘图输入</button>
      <div class="treetools">
        <button aria-label="全部展开"><svg width="17" height="16"><path d="M5 1v8M1 5h8M12 7v8M8 11h8" stroke="#000" stroke-width="4"/><path d="M5 2v6M2 5h6M12 8v6M9 11h6" stroke="#0aa" stroke-width="2"/></svg></button>
        <button aria-label="全部折叠"><svg width="17" height="16"><path d="M0 5h9M7 11h9" stroke="#000" stroke-width="4"/><path d="M1 5h7M8 11h7" stroke="#0aa" stroke-width="2"/></svg></button>
      </div>
      <div class="treebox">
        <ul class="tree">
          <li><div class="par"><svg class="chev"><path d="M1 2l4 4 4-4"/></svg><svg class="ic"><use href="#fopen"/></svg>梁</div>
            <ul><li><svg class="ic"><use href="#tbeam"/></svg><a href="#n">梁<b>(L)</b></a></li><li><svg class="ic"><use href="#ring"/></svg><a href="#n">圈梁<b>(E)</b></a></li></ul></li>
          <li><div class="par"><svg class="chev"><path d="M1 2l4 4 4-4"/></svg><svg class="ic"><use href="#fopen"/></svg>板</div>
            <ul><li><svg class="ic"><use href="#slab"/></svg><a href="#n">现浇板<b>(B)</b></a></li><li><svg class="ic"><use href="#spiral"/></svg><a href="#n">螺旋板<b>(B)</b></a></li><li><svg class="ic"><use href="#cap"/></svg><a href="#n">柱帽<b>(V)</b></a></li><li><svg class="ic"><use href="#hole"/></svg><a href="#n">板洞<b>(N)</b></a></li><li><svg class="ic"><use href="#bar1"/></svg><a href="#n">板受力筋<b>(S)</b></a></li><li><svg class="ic"><use href="#bar2"/></svg><a href="#n">板负筋<b>(F)</b></a></li><li><svg class="ic"><use href="#strip"/></svg><a href="#n">楼层板带<b>(H)</b></a></li></ul></li>
          <li><div class="par"><svg class="chev"><path d="M1 2l4 4 4-4"/></svg><svg class="ic"><use href="#fopen"/></svg>基础</div>
            <ul><li><svg class="ic"><use href="#fbeam"/></svg><a href="#n">基础梁<b>(F)</b></a></li><li><span class="sel"><svg class="ic"><use href="#raftf"/></svg><a href="#n">筏板基础<b>(M)</b></a></span></li><li><svg class="ic"><use href="#pit"/></svg><a href="#n">集水坑<b>(K)</b></a></li><li><svg class="ic"><use href="#pier"/></svg><a href="#n">柱墩<b>(Y)</b></a></li><li><svg class="ic"><use href="#bar1"/></svg><a href="#n">筏板主筋<b>(R)</b></a></li><li><svg class="ic"><use href="#bar2"/></svg><a href="#n">筏板负筋<b>(X)</b></a></li><li><svg class="ic"><use href="#indep"/></svg><a href="#n">独立基础<b>(P)</b></a></li><li><svg class="ic"><use href="#stripf"/></svg><a href="#n">条形基础<b>(T)</b></a></li><li><svg class="ic"><use href="#pcap"/></svg><a href="#n">桩承台<b>(V)</b></a></li><li><svg class="ic"><use href="#fbeam"/></svg><a href="#n">承台梁<b>(F)</b></a></li><li><svg class="ic"><use href="#pile"/></svg><a href="#n">桩<b>(U)</b></a></li><li><svg class="ic"><use href="#strip"/></svg><a href="#n">基础板带<b>(W)</b></a></li></ul></li>
          <li><div class="par"><svg class="chev off"><path d="M3 0l4 4-4 4"/></svg><svg class="ic"><use href="#fclosed"/></svg>其它</div></li>
          <li><div class="par"><svg class="chev"><path d="M1 2l4 4 4-4"/></svg><svg class="ic"><use href="#fopen"/></svg>自定义</div>
            <ul><li><svg class="ic"><use href="#cpt"/></svg><a href="#n">自定义点</a></li><li><svg class="ic"><use href="#cline"/></svg><a href="#n">自定义线<b>(X)</b></a><svg class="ic near"><use href="#grid2"/></svg><em class="new">NEW</em></li><li><svg class="ic"><use href="#cface"/></svg><a href="#n">自定义面</a></li><li><svg class="ic"><use href="#dim"/></svg><a href="#n">尺寸标注<b>(W)</b></a></li></ul></li>
          <li><div class="par"><svg class="chev off"></svg><svg class="ic"><use href="#fclosed"/></svg>识别<svg class="ic near"><use href="#grid2"/></svg><em class="new">NEW</em></div></li>
        </ul>
        <div class="scroll"><svg class="chev"><path d="M1 6l4-4 4 4"/></svg><span class="thumb"></span><svg class="chev"><path d="M1 2l4 4 4-4"/></svg></div>
      </div>
      <button class="modbtn">单构件输入</button>
      <button class="modbtn">报表预览</button>
    </aside>

    <main class="main">
      <div class="bar"><div class="grp">
        <i class="grip"></i>
        <button class="tool"><svg class="ic"><use href="#erase"/></svg>删除</button><i class="sep"></i>
        <button class="tool"><svg class="ic"><use href="#copy"/></svg>复制</button>
        <button class="tool"><svg class="ic"><use href="#mirror"/></svg>镜像</button><i class="sep"></i>
        <button class="tool"><svg class="ic"><use href="#move"/></svg>移动</button>
        <button class="tool"><svg class="ic"><use href="#rot"/></svg>旋转</button><i class="sep"></i>
        <button class="tool" disabled><svg class="ic"><use href="#extend"/></svg>延伸</button>
        <button class="tool" disabled><svg class="ic"><use href="#trim"/></svg>修剪</button><i class="sep"></i>
        <button class="tool" disabled><svg class="ic"><use href="#brk"/></svg>打断</button>
        <button class="tool"><svg class="ic"><use href="#merge"/></svg>合并</button>
        <button class="tool"><svg class="ic"><use href="#split"/></svg>分割</button><i class="sep"></i>
        <button class="tool tight" disabled><svg class="ic"><use href="#align"/></svg>对齐<i class="dd"></i></button>
        <button class="tool"><svg class="ic"><use href="#offset"/></svg>偏移</button>
        <button class="tool"><svg class="ic"><use href="#stretch"/></svg>拉伸</button><i class="sep"></i>
        <button class="tool"><svg class="ic"><use href="#grippt"/></svg>设置夹点</button>
      </div></div>
      <div class="bar"><div class="grp">
        <i class="grip"></i>
        <label class="pick w57"><select aria-label="楼层"><option>基础层</option></select><i class="dd"></i></label>
        <label class="pick w69"><select aria-label="构件类别"><option>基础</option></select><i class="dd"></i></label>
        <label class="pick w69"><select aria-label="构件类型"><option>筏板基础</option></select><i class="dd"></i></label>
        <label class="pick w69"><select aria-label="构件"><option>FB-3</option></select><i class="dd"></i></label>
        <i class="sep"></i>
        <button class="tool"><svg class="ic"><use href="#prop"/></svg>属性</button>
        <button class="tool"><svg class="ic"><use href="#pen"/></svg>编辑钢筋</button>
        <button class="tool"><svg class="ic"><use href="#list"/></svg>构件列表</button>
        <button class="tool"><svg class="ic"><use href="#pick"/></svg>拾取构件</button>
      </div><div class="grp">
        <i class="grip"></i>
        <button class="tool"><svg class="ic"><use href="#twop"/></svg>两点</button>
        <button class="tool"><svg class="ic"><use href="#para"/></svg>平行</button>
        <button class="tool"><svg class="ic"><use href="#pang"/></svg>点角<i class="dd"></i></button>
        <button class="tool"><svg class="ic"><use href="#tria"/></svg>三点辅轴<i class="dd"></i></button>
        <button class="tool"><svg class="ic"><use href="#erase"/></svg>删除辅轴</button>
        <button class="tool"><svg class="ic"><use href="#len"/></svg>长度标注<i class="dd"></i></button>
      </div></div>
      <div class="bar"><div class="grp gdraw">
        <i class="grip"></i>
        <button class="tool on"><svg class="ic"><use href="#cursor"/></svg>选择</button><i class="dd lone"></i><i class="sep"></i>
        <button class="tool"><svg class="ic"><use href="#pt"/></svg>点</button><i class="sep"></i>
        <button class="tool"><svg class="ic"><use href="#line"/></svg>直线</button>
        <button class="tool"><svg class="ic"><use href="#arc"/></svg>三点画弧<i class="dd"></i></button>
        <label class="pick w55"><select aria-label="半径"><option></option></select><i class="dd"></i></label>
        <button class="tool"><svg class="ic"><use href="#rect"/></svg>矩形</button><i class="sep"></i>
        <button class="tool"><svg class="ic"><use href="#auto"/></svg>自动生成板</button>
        <button class="tool"><svg class="ic"><use href="#beam"/></svg>按梁分割</button>
        <button class="tool marked"><svg class="ic"><use href="#raft"/></svg>设置筏板变截面
          <svg class="mark" viewBox="0 0 116 38"><ellipse cx="58" cy="19" rx="55" ry="17" fill="none" stroke="#f00000" stroke-width="3"/></svg></button>
        <button class="tool"><svg class="ic"><use href="#view"/></svg>查看板内钢筋</button>
        <button class="tool"><svg class="ic"><use href="#slope"/></svg>设置所有边坡<i class="dd"></i></button>
        <button class="tool"><svg class="ic"><use href="#unslope"/></svg>取消所有边坡<i class="dd"></i></button>
        <button class="more" aria-label="更多">»</button>
      </div><div class="grp stub"><i class="grip"></i></div></div>

      <section class="canvas">
        <svg class="plan" width="100%" height="100%"><g transform="translate(-252 -168)">
          <rect x="1019" y="168" width="2000" height="215" fill="#b9b9b9"/>
          <rect x="252" y="168" width="767" height="215" fill="#007ef8"/>
          <g fill="none" shape-rendering="crispEdges">
            <path d="M252 383.500h3000" stroke="#f00"/>
            <path d="M252 384.500h767" stroke="#fff" stroke-dasharray="4 3"/>
            <path d="M263.500 168v2000M352.500 168v2000M663.500 168v2000" stroke="#800000"/>
            <path d="M530.500 168v2000M1019.500 168v2000" stroke="#f00"/>
            <path d="M529.500 168v24M1018.500 168v216" stroke="#fff" stroke-dasharray="5 4"/>
          </g>
          <g fill="none" stroke="#008000"><circle cx="265" cy="384" r="12.500"/><circle cx="530.500" cy="181" r="12.500"/><circle cx="1019.500" cy="181" r="12.500"/></g>
          <g class="axis" fill="#a89484" text-anchor="middle"><text x="265" y="389">D</text><text x="530.500" y="187">6</text><text x="1019.500" y="186">7</text></g>
          <g fill="none" stroke="#f00000" stroke-width="3"><ellipse cx="329" cy="236.500" rx="45.500" ry="20"/><ellipse cx="946" cy="236.500" rx="17.500" ry="12"/></g>
          <path d="M307 625v-40" stroke="#0f0" stroke-width="4"/><path d="M307 575l5 13h-10z" fill="#0f0"/>
          <path d="M307 625h40" stroke="#f00" stroke-width="4"/><path d="M356 625l-12 5v-10z" fill="#f00"/>
          <path d="M316 579l4.500 4.500 5-4.500M320.500 583.500v4.500" fill="none" stroke="#0f0"/>
          <path d="M344 604l9 10M353 604l-9 10" stroke="#f00"/>
        </g></svg>

        <div class="dialog" role="dialog" aria-label="筏板变截面定义">
          <div class="dlgtitle"><h2>筏板变截面定义</h2><button aria-label="关闭"><svg width="12" height="12"><path d="M1 1l10 10M11 1L1 11" stroke="#111"/></svg></button></div>
          <div class="sketch">
            <svg viewBox="451 219 464 312">
              <g fill="none" stroke="#fff">
                <path d="M495.500 280v148M495.500 296.500h218v27h186M899.500 309v77M899.500 366.500h-102l-32 45M495.500 411.500h328" />
                <path d="M713.500 265v21M743.500 265v21M713.500 276.500h30M705 285l16-17M735 285l16-17"/>
                <path d="M713.500 415v21M765.500 415v21M713.500 426.500h52M706 434l16-17M757 434l17-17"/>
                <path d="M495.500 342.500l-12 7h23l-11 8M899.500 336.500l-12 7h23l-11 8"/>
                <path d="M772 400q8 2 7.500 11"/>
              </g>
              <path d="M713.500 274v18M713.500 324v14M713.500 344v18M713.500 368v18M713.500 392v18" stroke="#f00"/>
              <g fill="#fff"><text class="t20" x="567" y="258">上部延伸长度</text><text class="mono" x="771" y="258">mm</text><text class="mono" x="768" y="460">mm</text>
              <text class="t26" x="455" y="510">说明<tspan class="mono">:</tspan>红色线为所绘制的筏板图元交线。</text></g>
              <g fill="#0f0" class="num"><text x="720" y="260">0</text><text x="781" y="406">45</text></g>
              <circle cx="815.500" cy="388.500" r="3" fill="none" stroke="#fff"/>
            </svg>
            <input type="text" value="0" aria-label="下部延伸长度 mm"><i class="caret"></i>
          </div>
          <div class="dlgfoot"><button>确定</button><button>取消</button></div>
        </div>
      </section>

      <div class="bar bottom"><div class="grp">
        <i class="grip"></i>
        <button class="tool"><svg class="ic"><use href="#ortho"/></svg>正交</button>
        <button class="tool on"><svg class="ic"><use href="#snap"/></svg>对象捕捉</button>
        <button class="tool on"><svg class="ic"><use href="#dyn"/></svg>动态输入</button>
      </div><div class="grp">
        <i class="grip"></i>
        <button class="tool"><svg class="ic"><use href="#xp"/></svg>交点</button>
        <button class="tool on"><svg class="ic"><use href="#perp"/></svg>垂点</button>
        <button class="tool on"><svg class="ic"><use href="#mid"/></svg>中点</button>
        <button class="tool"><svg class="ic"><use href="#vert"/></svg>顶点</button>
        <button class="tool"><svg class="ic"><use href="#coord"/></svg>坐标</button>
      </div><div class="grp dim">
        <i class="grip"></i>
        <label class="pick w57"><select aria-label="偏移方式"><option>不偏移</option></select><i class="dd"></i></label>
        <i class="sep"></i>
        <label>X=<span class="num-in"><input type="text" value="0"><svg width="7" height="13"><path d="M0 3h7L3.500 0zM0 10h7l-3.500 3z" fill="#555"/></svg></span>mm</label>
        <label class="yl">Y=<span class="num-in"><input type="text" value="0"><svg width="7" height="13"><path d="M0 3h7L3.500 0zM0 10h7l-3.500 3z" fill="#555"/></svg></span>mm</label>
        <i class="sep"></i>
        <label class="rot"><input type="checkbox">旋转</label>
        <label><span class="num-in big"><input type="text" value="0.000" aria-label="旋转角度"><svg width="7" height="13"><path d="M0 3h7L3.500 0zM0 10h7l-3.500 3z" fill="#555"/></svg></span>°</label>
      </div></div>
    </main>
  </div>

  <footer class="status">
    <span class="s1">X=219059 Y=14660</span><span class="s2"><q>层高</q>:3.47m</span><span class="s3"><q>底标高</q>:-3.5m</span><span class="s4">2</span><span class="s5"><q>按鼠标左键指定第一个角点，或拾取构件图元</q></span>
    <div class="ime">
      <svg class="sg"><use href="#sogou"/></svg><em>英</em>
      <svg width="16" height="16"><circle cx="5" cy="6" r="2" fill="#1a72c8"/><path d="M10 8q3 2 0 5" fill="none" stroke="#1a72c8" stroke-width="2.500"/></svg>
      <svg width="16" height="16"><rect x="5" y="1" width="6" height="9" rx="3" fill="#1a72c8"/><path d="M3 6c0 8 10 8 10 0M8 12v3M5 15h6" fill="none" stroke="#1a72c8" stroke-width="1.500"/></svg>
      <svg width="16" height="16"><rect x="1" y="3" width="14" height="10" fill="none" stroke="#1a72c8" stroke-width="1.500"/><path d="M3 6h10M3 8.500h10M4.500 11h7" stroke="#1a72c8" stroke-width="1.300" stroke-dasharray="2 1"/></svg>
      <svg width="16" height="16"><circle cx="7" cy="4" r="3" fill="#b3bed0"/><path d="M1 13c0-7 11-7 12 0z" fill="#b3bed0"/><path d="M8 9v6M10 9.500h5l-2 5.500" fill="none" stroke="#8593aa" stroke-width="1.500"/></svg>
      <svg width="16" height="16"><path d="M5 2q3 2 6 0l4.500 3-2 3-1.500-1v8H4V7L2.500 8 .5 5z" fill="#1a72c8"/></svg>
      <svg width="16" height="16"><path d="M2 14l7-7" stroke="#1a72c8" stroke-width="3.500" stroke-linecap="round"/><path d="M14 4a3.500 3.500 0 1 1-3-2.500L9.500 4l2 1.500z" fill="#1a72c8" stroke="#1a72c8"/></svg>
    </div>
  </footer>

  <footer class="task">
    <button class="start" aria-label="开始"><svg width="16" height="16"><path d="M0 2.200l7-1V7.500H0zM8 1l8-1v7.500H8zM0 8.500h7v6.300l-7-1zM8 8.500h8V16l-8-1.200z" fill="#fff"/></svg></button>
    <div class="search"><svg width="22" height="22"><circle cx="11" cy="11" r="9" fill="none" stroke="#fff" stroke-width="3"/></svg><input type="text" placeholder="在这里输入你要搜索的内容" aria-label="搜索">
      <svg width="12" height="18"><path d="M4 1.500h4v9H4zM1.500 8v4.500h9V8M6 13v3.500M3 16.500h6" fill="none" stroke="#999"/></svg></div>
    <div class="apps">
      <button aria-label="风扇"><svg width="24" height="24"><g fill="#e6e6e6"><path d="M11 11C3 12 1 8 2 5s6-4 9-3q-2 4 0 9z"/><path d="M13 11c-1-8 3-10 6-9s4 6 3 9q-4-2-9 0z"/><path d="M13 13c8-1 10 3 9 6s-6 4-9 3q2-4 0-9z"/><path d="M11 13c1 8-3 10-6 9s-4-6-3-9q4 2 9 0z"/></g></svg></button>
      <button aria-label="浏览器"><svg width="20" height="20" viewBox="0 0 24 24"><path d="M22 2C14 0 4 2 3 11s9 13 15 9c5-4 3-11-3-12-5 0-7 6-3 8 2 1 4-1 3-3M22 2c-1 3-4 3-8 3-6 1-9 6-6 11s10 3 11-1" fill="none" stroke="#ddd" stroke-width="1.600"/></svg></button>
      <i class="tsep"></i>
      <button aria-label="Edge"><svg width="22" height="22"><path d="M1 10C2 3 7 1 11 1c6 0 10 4 10 11H8c0 6 7 7 12 4v4c-8 4-17 1-17-7 0-4 3-7 7-8-2 1-2 3-2 4h7c0-6-9-5-14 1z" fill="#0b7ee0"/></svg></button>
      <button aria-label="商店"><svg width="22" height="24"><path d="M1 6l20 0v14l-9 3-11-2z" fill="#fff"/><path d="M6 6c0-6 4-5 5-3M9 6c1-5 7-5 7 0" fill="none" stroke="#fff" stroke-width="1.500"/><path d="M5 10.500l5-1v4H5zM11 9.300l6-1v5.200h-6zM5 14.500h5v4l-5-1zM11 14.500h6v5l-6-.8z" fill="#02090c"/></svg></button>
      <button class="run" aria-label="资源管理器"><svg width="22" height="20"><path d="M1 2h8l1 2h11v14H1z" fill="#ffe08a"/><path d="M1 2h8v3H1z" fill="#f0b52e"/><path d="M5 19v-8h13v8h-4v-4H9v4z" fill="#2ea7e8"/></svg></button>
      <button class="run blue" aria-label="广联达"><svg width="24" height="24"><use href="#swirl"/></svg></button>
      <button class="run" aria-label="360浏览器"><svg width="24" height="24"><circle cx="12" cy="12" r="10" fill="#4fbf36" stroke="#e4f8dc" stroke-width="1.500"/><path d="M6 12.500h11c0-7-10-7-10.500 0 0 6 8 6 10 3" fill="none" stroke="#fff" stroke-width="2.500"/></svg></button>
      <button class="run" aria-label="记事"><svg width="24" height="24"><rect width="24" height="24" rx="3" fill="#f29a1e"/><path d="M3 6l12-2 3 15-13 2z" fill="#fff8e8"/><path d="M6 10l8-1M6 13l8-1M7 16l5-1" stroke="#c79040"/><path d="M21 2l-8 14" stroke="#8a3a10" stroke-width="2.500"/></svg></button>
      <button class="run act" aria-label="GGJ2013"><svg width="24" height="24"><use href="#app"/></svg></button>
    </div>
    <div class="tray">
      <div class="cpu">27%<br>CPU使用</div>
      <svg class="x10" width="12" height="8"><path d="M1 7l5-5 5 5" fill="none" stroke="#eee" stroke-width="1.300"/></svg>
      <svg width="17" height="12"><path d="M5.500 3.500h9v7h-9zM15.500 5v4" fill="none" stroke="#fff"/><path d="M7 5h6v4H7z" fill="#fff"/><path d="M0 2h6v3l-2 2H2L0 5zM1.500 0v2M4.500 0v2M3 7v4h3" fill="#fff" stroke="#fff"/></svg>
      <svg width="13" height="14"><path d="M1 13C1 6 6 1 13 1M4 13c0-5 4-9 9-9M7 13c0-3 3-6 6-6M10 13c0-1 1-3 3-3" fill="none" stroke="#ddd"/></svg>
      <svg width="17" height="14"><path d="M1 5h2.500L7 1.500v11L3.500 9H1zM9 5q2 2 0 4M11 3q4 4 0 8M13 1.500q6 5.500 0 11" fill="none" stroke="#ddd"/></svg>
      <svg width="23" height="14"><path d="M.5.500h22v12H.5z" fill="none" stroke="#fff"/><path d="M3 4h17M3 7h17" stroke="#fff" stroke-dasharray="2 1"/><path d="M6 10h11" stroke="#fff"/></svg>
      <span class="zh">中</span>
      <svg class="x5" width="16" height="16"><use href="#sogou"/></svg>
      <div class="x10">16:16<br>2017/9/2</div>
      <svg class="x15" width="17" height="18"><path d="M1 1.500h15v11h-5l-2 3-2-3H1z" fill="none" stroke="#fff" stroke-width="1.300"/></svg>
      <i class="peek x10"></i>
    </div>
  </footer>
</div>
</body>
</html>
```
FILE: styles.css
```css
* { box-sizing: border-box; }
body { margin: 0; font: 12px/16px "Open Sans", "Noto Sans CJK SC", sans-serif; color: #000; background: #f0f0f0; overflow: hidden; }
button, input, select { font: inherit; color: inherit; margin: 0; }
button { border: 0; background: none; padding: 0; white-space: nowrap; }
h1, h2 { margin: 0; font-size: 12px; font-weight: 400; }
ul { list-style: none; margin: 0; padding: 0; }
a { color: inherit; text-decoration: none; }
svg { flex: none; display: block; }
.sprite { position: absolute; width: 0; height: 0; }
.ic { width: 16px; height: 16px; }

.app { display: grid; grid-template-rows: 23px 31px 30px minmax(0, 1fr) 22px 40px; grid-template-columns: minmax(0, 1fr); height: 100vh; position: relative; }

/* title bar */
.title { display: flex; align-items: center; gap: 5px; padding: 0 19px 3px 2px; background: #fff; color: #8c8c8c; }
.title h1 { flex: 1; white-space: pre; }
.title h1 span { font-size: 13px; }
.winbtns { display: flex; gap: 34px; }
.ball { position: absolute; left: 400px; top: -25px; width: 44px; height: 44px; padding-top: 21px; border-radius: 50%; background: linear-gradient(#5fd65f, #2fae4e); border: 2px solid #d9efdc; box-shadow: 0 2px 5px #888; color: #fff; font-weight: 700; text-align: center; z-index: 2; }

/* menu row */
.menu { display: flex; align-items: stretch; white-space: nowrap; }
.menus { display: flex; justify-content: space-between; flex: 0 0 786px; padding: 0 7px 2px 7px; }
.extras { display: flex; padding-right: 2px; }
.tip { flex: 0 0 187px; padding: 7px 28px; color: #6b3a00; background: linear-gradient(#fafafa, #f2f2f2); border-radius: 3px; }
.account { flex: 1; display: flex; align-items: center; gap: 6px; margin-left: 2px; padding: 0 4px 2px 2px; background: linear-gradient(#fafafa, #f2f2f2); border-radius: 3px; }
.bell { width: 14px; height: 16px; margin-left: 3px; }

/* toolbars */
.bar { display: flex; min-width: 0; background: #f0f0f0; }
.grp { display: flex; align-items: center; flex: none; padding-left: 4px; background: linear-gradient(#fcfcfc, #f0f0f0); border-radius: 3px; }
.top .grp { padding-bottom: 3px; }
.ga { flex: 0 0 150px; padding-left: 2px; margin-right: 2px; }
.gbx { flex: 0 0 550px; padding-left: 3px; margin-right: 3px; }
.gc { flex: 1; padding-left: 0; }
.tool { display: flex; align-items: center; gap: 4px; height: 24px; padding-left: 2px; margin-right: 5px; flex: none; }
.tool:disabled { color: #9a9a9a; }
.tool.tight { margin-right: 1px; }
.menu .tool { height: 29px; }
.dd { flex: none; width: 6px; height: 3px; margin: 0 1px 0 1px; border: solid transparent; border-width: 3px 3px 0; border-top-color: #111; }
.dd.wide { margin-left: 5px; }
.dd.lone { margin: 0 5px 0 3px; }
.tool:disabled .dd { border-top-color: #888; }
.sep { flex: none; width: 1px; height: 15px; margin: 0 3px 0 2px; background: #b5b5b5; }
.sep.tall { height: 26px; }
.grip { flex: none; width: 2px; height: 16px; margin-right: 3px; background: repeating-linear-gradient(#b4b4b4 0 2px, transparent 2px 4px); }
.more { margin-left: auto; align-self: flex-start; padding: 0 2px; font-size: 14px; font-weight: 700; line-height: 16px; }
.account .more { margin-right: 2px; }
.gc .more { margin-right: 6px; }
.tool.on { background: #deebf7; box-shadow: inset 0 0 0 1px #0078d7; padding: 0 4px 0 3px; margin-right: 0; }
.gdraw .tool.on { padding: 0 3px 0 2px; }
.pick { display: flex; align-items: center; height: 23px; margin-right: 3px; background: #fff; }
.pick select { flex: 1; min-width: 0; appearance: none; border: 0; background: none; padding: 0 0 0 2px; outline: 0; }
.pick .dd { margin: 0 3px 0 0; }
.pick .ic { margin: 0 2px; }
.w55 { width: 55px; } .w57 { width: 57px; } .w62 { width: 62px; } .w69 { width: 69px; }
.main > .bar > .grp + .grp { margin-left: 2px; padding-left: 3px; }
.gdraw { flex: 1; max-width: 1079px; }
.gdraw .more { margin-right: 2px; }
.stub { min-width: 30px; }
.marked { position: relative; }
.mark { position: absolute; left: 3px; top: -5px; width: 116px; height: 38px; z-index: 3; }

/* body */
.body { display: grid; grid-template-columns: 252px minmax(0, 1fr); min-height: 0; }
.main { display: grid; grid-template-rows: 28px 28px 28px minmax(0, 1fr) 31px; min-width: 0; min-height: 0; }
.side { display: flex; flex-direction: column; min-height: 0; padding: 0 4px 1px 1px; }
.sidehead { display: flex; align-items: center; gap: 8px; height: 16px; margin-bottom: 1px; padding-right: 4px; border: 1px solid #999; }
.sidehead h2 { flex: 1; }
.modbtn { flex: none; height: 23px; border: 1px solid #a0a0a0; margin-top: -1px; background: #f0f0f0; }
.treetools { display: flex; gap: 6px; align-items: center; flex: 0 0 27px; padding-left: 6px; background: linear-gradient(#fff, #f0f0f0); border: solid #a0a0a0; border-width: 0 1px; }
.treebox { flex: 1; min-height: 0; display: flex; overflow: hidden; background: #fff; border: 2px solid #8a8f98; margin: 0 1px 2px 1px; }
.tree { flex: 1; min-width: 0; padding-left: 6px; white-space: nowrap; }
.tree b { font: 10px/12px "Liberation Mono", monospace; }
.chev { width: 10px; height: 8px; fill: none; stroke: #444; stroke-width: 2; }
.chev.off { stroke: #aaa; }
.par { display: flex; align-items: center; height: 16px; }
.par .ic { margin: 0 5px 0 7px; }
.tree ul { margin-left: 5px; padding-left: 18px; border-left: 1px dotted #888; }
.tree ul li { display: flex; align-items: center; height: 16px; border-left: 1px dotted #888; }
.tree ul li::before { content: ""; width: 11px; border-top: 1px dotted #888; }
.tree ul .ic { margin-right: 4px; }
.sel { display: flex; background: #d9d9d9; padding-right: 5px; }
.tree .ic.near { margin: 0; }
.new { align-self: flex-start; margin-left: 1px; font: 700 8px/8px "DejaVu Sans", sans-serif; background: #ffe000; }
.scroll { flex: 0 0 15px; display: flex; flex-direction: column; align-items: center; padding: 5px 0; background: #f0f0f0; }
.thumb { width: 15px; flex: 1; margin: 180px 0 10px; background: #cdcdcd; }

/* drawing canvas */
.canvas { position: relative; background: #000; overflow: hidden; margin-right: 1px; }
.plan { position: absolute; inset: 0; }
.axis { font: 14px "Liberation Mono", monospace; }
.dialog { position: absolute; left: 196px; top: 22px; width: 470px; background: #f0f0f0; border: 1px solid #2080e0; box-shadow: 0 4px 14px rgba(0, 0, 0, .45); }
.dlgtitle { display: flex; justify-content: space-between; align-items: center; height: 27px; padding: 0 9px 0 3px; background: #fff; }
.sketch { position: relative; background: #000; border: 1px solid #fff; margin: 0 1px; outline: 1px solid #a0a0a0; outline-offset: -1px; }
.sketch svg { width: 100%; }
.sketch text { font-family: "Liberation Mono", "Noto Sans CJK SC", monospace; font-weight: 300; }
.sketch .t20 { font-size: 20px; }
.sketch .t26 { font-size: 26px; }
.sketch .mono { font-family: "Liberation Mono", monospace; font-size: 22px; }
.sketch .num text { font-family: "Liberation Serif", serif; font-size: 26px; }
.sketch input { position: absolute; left: 267px; top: 220px; width: 60px; height: 29px; border: 0; padding: 0 0 0 1px; background: #fff; font: 26px "Liberation Serif", serif; }
.caret { position: absolute; left: 281px; top: 221px; width: 1px; height: 26px; background: #000; }
.dlgfoot { display: flex; justify-content: flex-end; gap: 8px; padding: 12px 13px 8px; }
.dlgfoot button { width: 72px; height: 23px; background: #e1e1e1; border: 1px solid #adadad; }

/* bottom toolbar */
.bottom .grp { margin-bottom: 2px; padding-right: 2px; }
.dim { color: #6d6d6d; }
.dim label { display: flex; align-items: center; gap: 3px; font-size: 13px; }
.dim .pick { color: #000; gap: 0; font-size: 12px; }
.num-in { display: flex; align-items: center; width: 58px; height: 23px; padding-right: 4px; border: 1px solid #6d6d6d; background: #f4f4f4; }
.num-in input { flex: 1; min-width: 0; border: 0; background: none; text-align: right; padding: 0 9px 0 0; }
.num-in.big { width: 68px; margin-left: 2px; }
.dim .yl { margin-left: 3px; }
.dim .rot { color: #000; font-size: 12px; gap: 8px; }
.dim .rot input { appearance: none; width: 12px; height: 12px; border: 1px solid #999; background: #f6f6f6; }

/* status bar */
.status { position: relative; display: flex; gap: 2px; font: 10px/18px "Liberation Mono", monospace; background: #f0f0f0; padding-top: 2px; }
.status > span { display: flex; align-items: center; border: 1px solid #d0d0d0; padding-left: 1px; background: linear-gradient(#fff, #f0f0f0); white-space: nowrap; }
.status q { quotes: none; font: 12px/18px "Noto Sans CJK SC", sans-serif; }
.s1 { flex: 0 0 148px; } .s2 { flex: 0 0 78px; } .s3 { flex: 0 0 98px; } .s4 { flex: 0 0 48px; } .s5 { flex: 1; }
.ime { position: absolute; right: 0; bottom: 0; display: flex; align-items: center; gap: 6px; height: 24px; padding: 0 4px 0 0; background: #fff; border: 1px solid #b8cde0; color: #1a72c8; font: 700 15px/20px "Noto Sans CJK SC", sans-serif; }
.ime em { font-style: normal; }
.sg { width: 27px; height: 27px; margin-left: -1px; }

/* taskbar */
.task { display: flex; background: #02090c; color: #fff; }
.start { display: flex; align-items: center; justify-content: center; width: 48px; background: #000; }
.search { display: flex; align-items: center; flex: 0 0 344px; padding: 0 14px 0 9px; background: #333; gap: 5px; }
.search input { flex: 1; min-width: 0; border: 0; background: none; font-size: 14px; padding: 0; }
.search input::placeholder { color: #999; }
.apps { display: flex; align-items: stretch; padding-left: 2px; }
.apps button { display: flex; align-items: center; justify-content: center; width: 49px; }
.tsep { width: 4px; height: 16px; margin: 12px 12px 0 8px; border: solid #3a4447; border-width: 0 1px; }
.apps .run { position: relative; }
.apps .run::after { content: ""; position: absolute; left: 4px; right: 4px; bottom: 0; height: 2px; background: #76b9ed; }
.apps .act { background: #343e41; }
.apps .act::after { left: 0; right: 0; }
.apps .blue { color: #1ea0f2; }
.tray { display: flex; align-items: center; gap: 9px; margin-left: auto; padding-right: 4px; text-align: center; line-height: 17px; }
.zh { font-size: 14px; }
.x15 { margin-left: 15px; }
.x10 { margin-left: 11px; }
.x5 { margin-left: 5px; }
.peek { width: 1px; height: 40px; background: #444; }
```
